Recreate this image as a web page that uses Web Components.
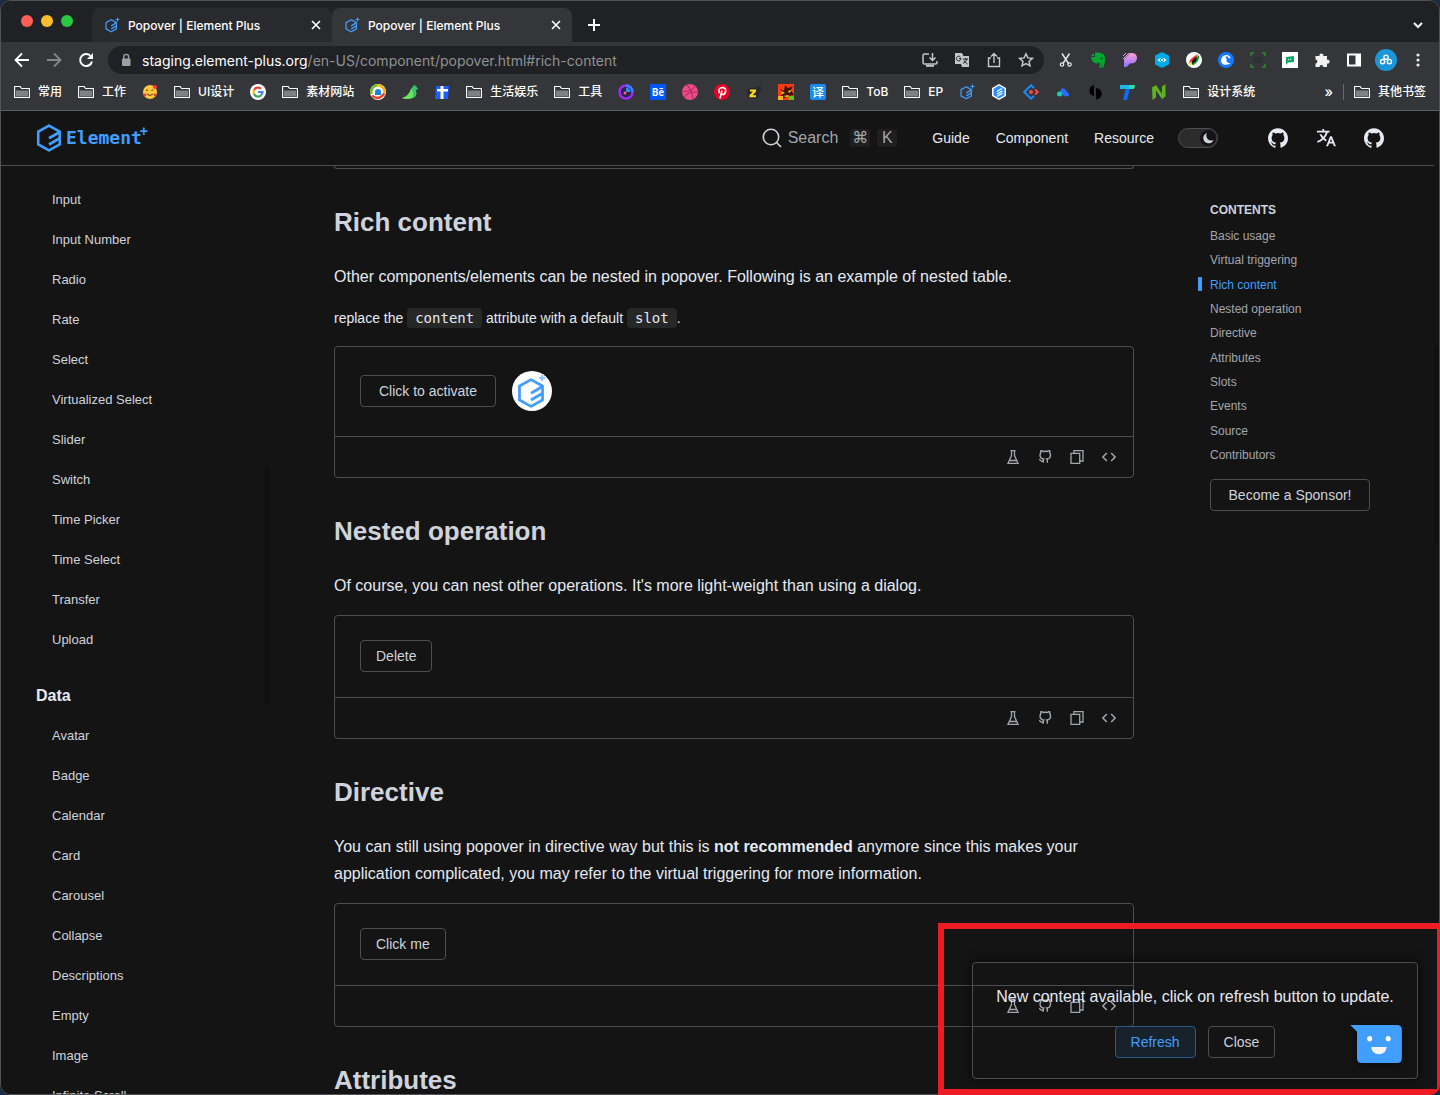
<!DOCTYPE html>
<html lang="en">
<head>
<meta charset="utf-8">
<title>Popover | Element Plus</title>
<style>
	html, body {
		height: 100%;
		margin: 0;
		overflow: hidden;
		background: #1b2a45;
		font-family: "Liberation Sans", "Noto Sans CJK SC", sans-serif;
	}
</style>
</head>
<body>
<browser-window>
	<tab-strip slot="chrome">
		<browser-tab>Popover | Element Plus</browser-tab>
		<browser-tab active>Popover | Element Plus</browser-tab>
	</tab-strip>
	<address-bar slot="chrome"></address-bar>
	<bookmark-bar slot="chrome"></bookmark-bar>
	<site-header></site-header>
	<doc-layout>
		<side-menu slot="side"></side-menu>
		<doc-section>
			<demo-tail></demo-tail>
			<h2>Rich content</h2>
			<p>Other components/elements can be nested in popover. Following is an example of nested table.</p>
			<p class="tip">replace the <code>content</code> attribute with a default <code>slot</code>.</p>
			<demo-card><el-button wide>Click to activate</el-button><el-avatar></el-avatar></demo-card>
			<h2>Nested operation</h2>
			<p>Of course, you can nest other operations. It's more light-weight than using a dialog.</p>
			<demo-card><el-button>Delete</el-button></demo-card>
			<h2>Directive</h2>
			<p>You can still using popover in directive way but this is <b>not recommended</b> anymore since this makes your application complicated, you may refer to the virtual triggering for more information.</p>
			<demo-card><el-button>Click me</el-button></demo-card>
			<h2>Attributes</h2>
		</doc-section>
		<table-of-contents slot="toc"></table-of-contents>
	</doc-layout>
	<update-popup></update-popup>
	<chat-face></chat-face>
	<red-marker></red-marker>
</browser-window>
<script>
const MARK = `<path d="M22 8V7L12 1.400 2 7v12l10 5.600L22 19V8" fill="none" stroke="currentColor" stroke-width="2.400" stroke-linejoin="round"/><path d="M12 13.200 22 7.400M12 19 22 13.200" fill="none" stroke="currentColor" stroke-width="2.600"/>`;
const GITHUB = `<path fill="currentColor" d="M12 .3C5.370.3 0 5.670 0 12.300c0 5.300 3.440 9.800 8.200 11.380.6.110.820-.260.820-.580v-2.040c-3.340.730-4.040-1.610-4.040-1.610-.550-1.380-1.340-1.750-1.340-1.750-1.090-.740.080-.730.080-.730 1.200.080 1.840 1.240 1.840 1.240 1.070 1.830 2.810 1.300 3.490 1 .110-.780.420-1.310.760-1.610-2.660-.3-5.460-1.330-5.460-5.930 0-1.310.460-2.380 1.230-3.220-.130-.3-.540-1.520.110-3.170 0 0 1-.320 3.300 1.230a11.500 11.500 0 0 1 6 0c2.280-1.550 3.280-1.230 3.280-1.230.650 1.650.240 2.870.120 3.170.770.840 1.230 1.910 1.230 3.220 0 4.610-2.800 5.630-5.470 5.920.420.360.810 1.100.810 2.220v3.290c0 .310.210.690.820.570C20.560 22.100 24 17.600 24 12.300 24 5.670 18.630.3 12 .3"/>`;

// [viewBox, markup]
const ICONS = {
	mark: ["1 0 22 26",MARK],
	favicon: ["0 0 16 16",`<g transform="translate(1 2) scale(.52)">${MARK}</g><path d="M13.500.5v4M11.500 2.500h4" stroke="currentColor"/>`],
	close: ["0 0 16 16",`<path d="m4 4 8 8M12 4l-8 8" stroke="currentColor" stroke-width="1.600"/>`],
	plus: ["0 0 16 16",`<path d="M8 2v12M2 8h12" stroke="currentColor" stroke-width="2"/>`],
	chevron: ["0 0 16 16",`<path d="m4 6 4 4 4-4" fill="none" stroke="currentColor" stroke-width="2"/>`],
	back: ["0 0 16 16",`<path d="M15 8H2M8 1.500 1.500 8 8 14.500" fill="none" stroke="currentColor" stroke-width="1.800"/>`],
	forward: ["0 0 16 16",`<path d="M1 8h13M8 1.500 14.500 8 8 14.500" fill="none" stroke="currentColor" stroke-width="1.800"/>`],
	reload: ["0 0 16 16",`<path d="M13 4.500A6 6 0 1 0 14 9.500" fill="none" stroke="currentColor" stroke-width="2"/><path d="M15 1v6H9z" fill="currentColor"/>`],
	lock: ["0 0 16 16",`<rect x="4" y="6.500" width="8.500" height="7.500" rx="1" fill="currentColor"/><path d="M5.800 7V4.800a2.400 2.400 0 0 1 4.800 0V7" fill="none" stroke="currentColor" stroke-width="1.400"/>`],
	install: ["0 0 16 16",`<path d="M7 2H2.500Q1 2 1 3.500v7Q1 12 2.500 12h11q1.500 0 1.500-1.500V9M10.500 1v7M7.500 5.500l3 3 3-3" fill="none" stroke="currentColor" stroke-width="1.500"/><path d="M4 13h8v1.800H4z" fill="currentColor"/>`],
	gtranslate: ["0 0 16 16",`<path d="M1 1h7l1.500 3H15v11H8l-1-3H1z" fill="currentColor"/><path d="M7 6.500H5M7 6.500A2.300 2.300 0 1 1 6.400 5M9 7h5M11.500 6v1M13 7q-1 3-4 4.500M10 8.500q1 2 3.500 3.500" fill="none" stroke="#202124"/>`],
	share: ["0 0 16 16",`<path d="M5 6H2.500v8.500h11V6H11M8 11V1.500M5 4.500l3-3 3 3" fill="none" stroke="currentColor" stroke-width="1.400"/>`],
	star: ["0 0 16 16",`<path d="m8 1.800 1.900 4.100 4.500.5-3.400 3 1 4.400L8 11.500l-4 2.300 1-4.400-3.400-3 4.500-.5z" fill="none" stroke="currentColor" stroke-width="1.500"/>`],
	scissors: ["0 0 16 16",`<path d="m4 1.500 6.500 10M11.500 1.500 5 11.500" fill="none" stroke="#e8e8e8" stroke-width="1.400"/><circle cx="4" cy="12.500" r="1.700" fill="none" stroke="#e8e8e8" stroke-width="1.200"/><circle cx="11.500" cy="12.500" r="1.700" fill="none" stroke="#e8e8e8" stroke-width="1.200"/>`],
	evernote: ["0 0 16 16",`<path d="M5 .5h5q1 1.200 3 1.500 1.800.3 2 5 0 5-1.500 8Q12 16.500 9.500 15q-1-2 1-2.800l-2-1.700Q7 12 4.500 11 1.500 9.500 1.200 5H5z" fill="#00a82d"/><path d="M4 1v3H1z" fill="#00a82d"/><circle cx="11.500" cy="6.500" r="1" fill="#35363a"/><path d="M11 13.500h1.500" stroke="#35363a"/>`],
	popsy: ["0 0 16 16",`<defs><linearGradient id="a" x2="0" y2="1"><stop stop-color="#ff9fd8"/><stop offset="1" stop-color="#8a70ff"/></linearGradient></defs><path d="M2 7 8 1q7-.5 7 5t-7 5.500L4.500 15H2z" fill="url(#a)"/><path d="M1 4 4 1M1 7l6-6" stroke="#e69be6"/>`],
	hexeye: ["0 0 16 16",`<path d="m8 0 7 3.500v9L8 16l-7-3.500v-9z" fill="#00a9e8"/><path d="M3.500 8Q8 3.500 12.500 8 8 12.500 3.500 8" fill="#fff"/><circle cx="8" cy="8" r="1.700" fill="#fff" stroke="#00a9e8"/>`],
	pen: ["0 0 16 16",`<circle cx="8" cy="8" r="8" fill="#fff"/><path d="M2.500 12Q4 6 12 2l-4 6z" fill="#f22"/><path d="m5 11 8-8Q14 9 7 13.500z" fill="#00a020"/><path d="m6 9 5-5-1 5-4 3z" fill="#111"/><path d="m3 14 1-4 2 2z" fill="#ff0"/>`],
	wave: ["0 0 16 16",`<circle cx="8" cy="8" r="8" fill="#1677ff"/><path d="M3 9.500Q3 3 8.500 3q3.500.2 4 3.500-3-1.500-4 .8-.5 3.700 4 4.200Q5 15 3 9.500" fill="#fff"/><circle cx="9" cy="5.500" r="1.200" fill="#1677ff"/>`],
	frame: ["0 0 16 16",`<path d="M1 4V1h3M12 1h3v3M15 12v3h-3M4 15H1v-3" fill="none" stroke="#2f8c2f" stroke-width="1.400"/><rect x="3" y="5" width="10" height="6" fill="#2f3032"/>`],
	note: ["0 0 16 16",`<path d="M0 0h16v16H0z" fill="#fff"/><path d="m4 5 8-1v6l-6 .6L4 13z" fill="#07a860"/><path d="M6 7.500h4" stroke="#fff" stroke-dasharray="1"/>`],
	puzzle: ["0 0 16 16",`<path d="M1.500 4h4a2 2 0 1 1 3.800 0h3.700v3.800a2 2 0 1 1 0 3.800V15H9.300a1.900 1.900 0 1 0-3.800 0h-4v-3.600a1.900 1.900 0 1 0 0-3.800z" fill="#f1f1f1"/>`],
	panel: ["0 0 16 16",`<path d="M1 1.500h14v13H1z" fill="#fff"/><path d="M3 3.500h6.500v9H3z" fill="#35363a"/>`],
	account: ["0 0 24 24",`<circle cx="12" cy="12" r="12" fill="#1b96d8"/><g fill="none" stroke="#fff" stroke-width="1.500"><circle cx="12" cy="9" r="2.300"/><circle cx="8.300" cy="13.800" r="2.300"/><circle cx="15.700" cy="13.800" r="2.300"/></g>`],
	dots: ["0 0 16 16",`<g fill="#e8eaed"><circle cx="8" cy="3" r="1.600"/><circle cx="8" cy="8" r="1.600"/><circle cx="8" cy="13" r="1.600"/></g>`],
	folder: ["0 0 16 16",`<path d="M.6 2.500h5.600l1.400 2h7.800v9H.6z" fill="#35363a" stroke="#fff" stroke-width="1.100"/><path d="M2 6.500h12v6H2z" fill="#808184"/>`],
	emoji: ["0 0 16 16",`<circle cx="8" cy="8" r="7" fill="#ffc83d"/><path d="M4 6.500q1-1.500 2 0M9.500 6.500q1-1.500 2 0" fill="none" stroke="#5c3a10"/><path d="M5 10q3 3 6 0" fill="none" stroke="#5c3a10"/><g fill="#ef3b4e"><circle cx="3" cy="11" r="1.400"/><circle cx="13" cy="11" r="1.400"/><circle cx="13" cy="3" r="2"/></g>`],
	google: ["0 0 16 16",`<circle cx="8" cy="8" r="8" fill="#fff"/><g fill="none" stroke-width="2.200"><path d="M11 4.700A4.500 4.500 0 0 0 4 6" stroke="#ea4335"/><path d="M4.100 5.800a4.500 4.500 0 0 0 0 4.400" stroke="#fbbc05"/><path d="M4 10a4.500 4.500 0 0 0 7 1.500" stroke="#34a853"/><path d="M10.800 11.500A4.500 4.500 0 0 0 12.500 8H8" stroke="#4285f4"/></g>`],
	bot: ["0 0 16 16",`<circle cx="8" cy="8" r="8" fill="#fff"/><path d="M1.500 10A7 7 0 0 1 7 1.300" stroke="#6fbf1e" stroke-width="2.500" fill="none"/><path d="M7 1.300a7 7 0 0 1 7.500 8" stroke="#ffb000" stroke-width="2.500" fill="none"/><path d="M2 11.500q5.500 6 12.500-2" stroke="#f04020" stroke-width="2.500" fill="none"/><path d="M5 11V8a3 3 0 0 1 6 0v3z" fill="#1d82d8"/>`],
	bird: ["0 0 16 16",`<path d="M0 14Q7 12 9 5l3-4 2 1 2 3-2 1q2 8-5 8.500Q4 15.500 0 14" fill="#36c46a"/><path d="M0 14Q7 12 9 5q4 4 1 9-5 2-10 0" fill="#6ee05a"/>`],
	sticker: ["0 0 16 16",`<path d="M2 2h13l-1 13H1z" fill="#1f5bff"/><path d="M3 5h11v2.500H9.500V15h-3V7.500H3zM6.500 2h3v3h-3z" fill="#fff"/>`],
	swirl: ["0 0 16 16",`<circle cx="8" cy="8" r="6.500" fill="#2c2440" stroke="#9b2cf2" stroke-width="2.600"/><path d="M8 1.500A6.500 6.500 0 0 1 14.500 8" fill="none" stroke="#3d7dff" stroke-width="2.600"/><path d="M8 3.500A4.500 4.500 0 0 1 12.500 8H8z" fill="#2d8cf0"/><circle cx="7" cy="9" r="1.500" fill="#ff5ba8"/>`],
	behance: ["0 0 16 16",`<path d="M0 0h16v16H0z" fill="#0057ff"/><text x="8" y="12" font-family="Roboto, sans-serif" font-size="10" font-weight="700" fill="#fff" text-anchor="middle">Bē</text>`],
	dribbble: ["0 0 16 16",`<circle cx="8" cy="8" r="8" fill="#ea4c89"/><path d="M5 1q5 5 6 14M.6 7.500q8 .5 12.500-5M2.500 13q4-6.500 13-4.500" fill="none" stroke="#b52a63" stroke-width="1.100"/>`],
	pinterest: ["0 0 16 16",`<circle cx="8" cy="8" r="8" fill="#e60023"/><path d="m6 14.500 2-8M5.500 9.300Q3.500 4 8 3.500q4 0 3.700 3.500-.7 3.700-3 3.500-1.500-.3-1.300-1.500" fill="none" stroke="#fff" stroke-width="1.600"/>`],
	zcool: ["0 0 16 16",`<path d="M.5 8Q3 3 8 4q3 .5 4-3l.5 2.500L15 .5l-.5 3.500H16q-1 3-3 4 1 7-6 7Q1 15 .5 8" fill="#28292b"/><path d="M4 5.500h6v2L6.700 11.200H10v2H3.500v-2L7 7.500H4z" fill="#ffd91a"/>`],
	dragon: ["0 0 16 16",`<path d="M0 0h16v16H0z" fill="#ff3b12"/><path d="m2 5 4 2 1-6 3 3 5-2-2 4 3 5-6 1-5 3-4-2 4-3z" fill="#40110f"/><path d="m3 7 4 2-3 1zM10 7l4-1-3 3zM5 12l6-1-2 2z" fill="#ffd91a"/><path d="M10 12h6v4h-5z" fill="#6abf20"/><path d="M0 12h5v4H0z" fill="#ffb01a"/>`],
	yi: ["0 0 16 16",`<rect width="16" height="16" rx="2" fill="#168cf5"/><text x="8" y="12.500" font-family="Noto Sans CJK SC, sans-serif" font-size="12" fill="#fff" text-anchor="middle">译</text>`],
	hex: ["0 0 16 16",`<path d="m8 0 7 4v8l-7 4-7-4V4z" fill="#fff"/><path d="m8 1.500 5.500 3.200v6.600L8 14.500l-5.500-3.200V4.700z" fill="#2b8ffb"/><path d="m6 7.500 5-3M6 10l5.500-3M6 12.300l5.500-3" stroke="#fff" stroke-width="1.300"/>`],
	antd: ["0 0 16 16",`<path d="M11 4 8 1.200 1.200 8 8 14.800l3-3" fill="none" stroke="#1989fa" stroke-width="2"/><path d="m12 5.500 2.700 2.500-2.700 2.500" fill="none" stroke="#f5484f" stroke-width="2"/><circle cx="8" cy="8" r="2" fill="#f5484f"/>`],
	arco: ["0 0 16 16",`<path d="M6 5.500q2-2.500 4.200 0L14 10q.5 2.500-3 2.500-4-.5-6-5z" fill="#2a6bff"/><circle cx="4.500" cy="10" r="2.500" fill="#1ad1a5"/>`],
	halves: ["0 0 16 16",`<path d="M7 1v11A5.600 5.600 0 0 1 7 1M9 4a5.600 5.600 0 0 1 0 11.500z" fill="#000"/>`],
	tdesign: ["0 0 16 16",`<path d="M7 4h4L8 16H4z" fill="#0a6cff"/><path d="M1 1h15l-1 4H1z" fill="#19b8e8"/><path d="M10 1h6l-1 4h-5z" fill="#2edb9c"/>`],
	naive: ["0 0 16 16",`<path d="M1 3.500 5 1l6 9V2.500L14.500 0v12.500L11 15 5 6.500v7L1.500 16z" fill="#5db320"/>`],
	search: ["0 0 20 20",`<circle cx="9" cy="9" r="7.700" fill="none" stroke="currentColor" stroke-width="1.600"/><path d="m14.500 14.500 4.500 4.500" stroke="currentColor" stroke-width="1.600"/>`],
	moon: ["0 0 16 16",`<path d="M7 3a5.300 5.300 0 1 0 6.500 7A5 5 0 0 1 7 3" fill="currentColor"/>`],
	github: ["0 0 24 24",GITHUB],
	translate: ["1 1 22 22",`<path d="M18.500 10l4.400 11h-2.150l-1.200-3h-4.100l-1.200 3H12.100L16.500 10zM10 2v2h6v2h-1.970a18.200 18.200 0 0 1-3.620 6.300 14.900 14.900 0 0 0 2.340 1.700l-.750 1.880A17 17 0 0 1 9 13.720a16.700 16.700 0 0 1-6.200 3.550l-.540-1.930a14.700 14.700 0 0 0 5.330-3.040A18 18 0 0 1 4.770 8H7a16 16 0 0 0 2 2.880A16.200 16.200 0 0 0 11.910 6H2V4h6V2zm7.500 10.880L16.250 16h2.500z" fill="currentColor"/>`],
	flask: ["1 1 14 14",`<path d="M5.500 1.700h5M6.500 1.500v5L3 14.300h10L9.500 6.500v-5M4.500 11.500h7" fill="none" stroke="currentColor" stroke-width="1.300"/>`],
	cat: ["0 0 24 24",`<path d="M9 19c-5 1.500-5-2.500-7-3m14 6v-3.900a3.400 3.400 0 0 0-.9-2.600c3.100-.3 6.400-1.500 6.400-7A5.400 5.400 0 0 0 20 4.800 5 5 0 0 0 19.900 1S18.700.6 16 2.500a13.400 13.400 0 0 0-7 0C6.300.6 5.100 1 5.100 1A5 5 0 0 0 5 4.800a5.400 5.400 0 0 0-1.500 3.800c0 5.400 3.300 6.600 6.400 7A3.400 3.400 0 0 0 9 18.100V22" fill="none" stroke="currentColor" stroke-width="2.400"/>`],
	copy: ["1 1 14 14",`<path d="M5 4V1.700h9V12h-3M2 4.300h8.700v10H2z" fill="none" stroke="currentColor" stroke-width="1.300"/>`],
	code: ["0 0 16 16",`<path d="M5.500 3.500 1 8l4.500 4.500M10.500 3.500 15 8l-4.500 4.500" fill="none" stroke="currentColor" stroke-width="1.700"/>`],
	face: ["0 0 54 40",`<path d="M0 0h48q5 0 5 5v29q0 5-5 5H12q-5 0-5-5V7z" fill="#409eff"/><circle cx="20" cy="14" r="2.600" fill="#fff"/><circle cx="39" cy="14" r="2.600" fill="#fff"/><path d="M21.500 22.500h16q-1 7.500-8 7.500t-8-7.500" fill="#f5f5f5"/>`],
};

class UiIcon extends HTMLElement {
	constructor(){
		super();
		this.attachShadow({mode:"open"});
	}

	connectedCallback(){
		const [viewBox,markup] = ICONS[this.getAttribute("name")];
		this.shadowRoot.innerHTML = /*html*/`
			<style>
				:host {
					display: block;
					flex: none;
					width: 16px;
					height: 16px;
				}
				svg {
					display: block;
					width: 100%;
					height: 100%;
				}
			</style>
			<svg viewBox="${viewBox}" aria-hidden="true">${markup}</svg>
		`;
	}
}
customElements.define("ui-icon",UiIcon);

/** Registers an element whose shadow root is fixed markup. */
function define(name,html){
	customElements.define(name,class extends HTMLElement {
		constructor(){
			super();
			this.attachShadow({mode:"open"}).innerHTML = html;
		}
	});
}

const icon = name=>`<ui-icon name="${name}"></ui-icon>`;
const iconButton = (name,label=name)=>`<button type="button" aria-label="${label}">${icon(name)}</button>`;
const RESET = `
	button, a, input {
		font: inherit;
		color: inherit;
		text-decoration: none;
		background: none;
		border: 0;
		padding: 0;
		margin: 0;
	}
	button {
		display: grid;
		place-items: center;
	}
`;

define("browser-window",/*html*/`
	<style>
		:host {
			display: flex;
			flex-direction: column;
			position: relative;
			box-sizing: border-box;
			height: 100vh;
			overflow: hidden;
			background: #141414;
			border-radius: 10px;
		}
		header {
			flex: none;
			font-family: Inter, "Noto Sans CJK SC", sans-serif;
			border-bottom: 1px solid #5c5d60;
		}
		#edge {
			position: absolute;
			inset: 0;
			border: 1px solid #525356;
			border-radius: 10px;
			pointer-events: none;
		}
		#thumb {
			position: absolute;
			right: 0;
			top: 346px;
			width: 6px;
			height: 198px;
			background: #101010;
		}
	</style>
	<header><slot name="chrome"></slot></header>
	<slot></slot>
	<div id="thumb"></div>
	<div id="edge"></div>
`);

define("tab-strip",/*html*/`
	<style>
		${RESET}
		:host {
			display: flex;
			box-sizing: border-box;
			height: 42px;
			padding: 8px 14px 0 21px;
			background: #202124;
			color: #fff;
		}
		#lights {
			display: flex;
			gap: 8px;
			padding-top: 7px;
			width: 71px;
		}
		i {
			width: 12px;
			height: 12px;
			border-radius: 50%;
			background: #ff5f57;
		}
		i:nth-child(2) { background: #febc2e; }
		i:nth-child(3) { background: #28c840; }
		button { margin-left: 14px; }
		button:last-child { margin-left: auto; }
	</style>
	<div id="lights"><i></i><i></i><i></i></div>
	<slot></slot>
	${iconButton("plus","New tab")}
	${iconButton("chevron","Search tabs")}
`);

define("browser-tab",/*html*/`
	<style>
		${RESET}
		:host {
			display: flex;
			align-items: center;
			gap: 8px;
			box-sizing: border-box;
			width: 240px;
			padding: 0 8px 0 12px;
			border-radius: 8px 8px 0 0;
			background: #292a2d;
			font-size: 12px;
			font-weight: 500;
		}
		:host([active]) {
			background: #35363a;
		}
		ui-icon[name=favicon] { color: #409eff; }
		span { flex: 1; }
	</style>
	${icon("favicon")}
	<span><slot></slot></span>
	${iconButton("close","Close tab")}
`);

define("address-bar",/*html*/`
	<style>
		${RESET}
		:host {
			display: flex;
			align-items: center;
			height: 36px;
			padding: 0 6px;
			background: #35363a;
			color: #fff;
		}
		button {
			flex: none;
			width: 32px;
			height: 28px;
		}
		button[aria-label=Forward] { color: #85868a; }
		#omnibox {
			flex: 1;
			display: flex;
			align-items: center;
			min-width: 0;
			height: 28px;
			margin: 0 6px;
			padding: 0 2px 0 10px;
			border-radius: 14px;
			background: #202124;
			font-size: 14px;
		}
		#omnibox ui-icon { color: #9aa0a6; }
		#omnibox button ui-icon { color: #c4c5c7; }
		label { margin-left: 8px; }
		input {
			flex: 1;
			min-width: 0;
			color: #8f9195;
		}
		ui-icon[name=account] {
			width: 22px;
			height: 22px;
		}
	</style>
	${iconButton("back","Back")}${iconButton("forward","Forward")}${iconButton("reload","Reload")}
	<div id="omnibox">
		${icon("lock")}
		<label for="url">staging.element-plus.org</label><input id="url" value="/en-US/component/popover.html#rich-content">
		${["install","gtranslate","share","star"].map(n=>iconButton(n)).join("")}
	</div>
	${["scissors","evernote","popsy","hexeye","pen","wave","frame","note","puzzle","panel","account","dots"].map(n=>iconButton(n)).join("")}
`);

// plain strings are folders, ":name" is an icon without a title
const bookmark = item=>item[0]==":"
	? `<a href="#" aria-label="${item.slice(1)}">${icon(item.slice(1))}</a>`
	: `<a href="#">${icon("folder")}${item}</a>`;
define("bookmark-bar",/*html*/`
	<style>
		${RESET}
		:host {
			display: flex;
			align-items: center;
			gap: 16px;
			height: 27px;
			padding: 0 14px 5px;
			background: #35363a;
			color: #fff;
			font-size: 12px;
			font-weight: 500;
			line-height: 16px;
			white-space: nowrap;
		}
		a {
			display: flex;
			align-items: center;
			gap: 8px;
		}
		ui-icon[name=favicon] { color: #409eff; }
		#more {
			margin-left: auto;
			font-size: 14px;
		}
		#other {
			padding-left: 10px;
			margin-left: -6px;
			border-left: 1px solid #66676b;
		}
	</style>
	${["常用","工作",":emoji","UI设计",":google","素材网站",":bot",":bird",":sticker","生活娱乐","工具",":swirl",":behance",":dribbble",":pinterest",":zcool",":dragon",":yi","ToB","EP",":favicon",":hex",":antd",":arco",":halves",":tdesign",":naive","设计系统"].map(bookmark).join("")}
	<button type="button" id="more">»</button>
	<a href="#" id="other">${icon("folder")}其他书签</a>
`);

define("site-header",/*html*/`
	<style>
		${RESET}
		:host {
			display: flex;
			align-items: center;
			flex: none;
			height: 54px;
			margin-right: 6px;
			padding: 0 48px 0 36px;
			border-bottom: 1px solid #4c4d4f;
			color: #e5eaf3;
			font-size: 14px;
		}
		#logo {
			display: flex;
			align-items: center;
			gap: 4px;
			color: #409eff;
			font: bold 18px/28px "DejaVu Sans Mono", monospace;
		}
		#logo ui-icon {
			width: 26px;
			height: 28px;
		}
		#logo sup {
			align-self: flex-start;
			margin-left: -6px;
			font: bold 14px/14px "Liberation Sans", sans-serif;
		}
		#search {
			display: flex;
			align-items: center;
			margin-left: auto;
			color: #a3a6ad;
			font-size: 16px;
		}
		#search ui-icon {
			width: 20px;
			height: 20px;
			margin-right: 6px;
			color: #cfd3dc;
		}
		kbd {
			width: 20px;
			height: 18px;
			margin-left: 7px;
			border-radius: 3px;
			background: #1f1f20;
			font: 16px/18px "Liberation Sans", "DejaVu Sans", sans-serif;
			text-align: center;
		}
		kbd:first-of-type { margin-left: 12px; }
		nav {
			display: flex;
			gap: 26px;
			margin: 0 24px 0 35px;
		}
		#dark {
			display: flex;
			position: relative;
			margin-right: 48px;
		}
		#dark input {
			appearance: none;
			box-sizing: border-box;
			width: 40px;
			height: 20px;
			border: 1px solid #4c4d4f;
			border-radius: 10px;
			background: #2c2c2c;
		}
		#dark ui-icon {
			position: absolute;
			right: 2px;
			top: 2px;
			border-radius: 50%;
			background: #141414;
			color: #cfd3dc;
		}
		#links {
			display: flex;
			gap: 24px;
		}
		#links ui-icon {
			width: 20px;
			height: 20px;
			padding: 2px;
		}
	</style>
	<a href="#" id="logo">${icon("mark")}<span>Element</span><sup>+</sup></a>
	<button type="button" id="search">${icon("search")}Search<kbd>⌘</kbd><kbd>K</kbd></button>
	<nav><a href="#">Guide</a><a href="#">Component</a><a href="#">Resource</a></nav>
	<label id="dark"><input type="checkbox" role="switch" aria-label="Dark mode" checked>${icon("moon")}</label>
	<div id="links"><a href="#" aria-label="GitHub">${icon("github")}</a><button type="button" aria-label="Language">${icon("translate")}</button><a href="#" aria-label="GitHub">${icon("github")}</a></div>
`);

define("doc-layout",/*html*/`
	<style>
		:host {
			display: grid;
			grid-template-columns: 334px minmax(0,800px) minmax(0,1fr);
			flex: 1;
			min-height: 0;
			overflow: hidden;
		}
	</style>
	<slot name="side"></slot>
	<slot></slot>
	<slot name="toc"></slot>
`);

const menuLinks = names=>names.map(name=>`<a href="#">${name}</a>`).join("");
define("side-menu",/*html*/`
	<style>
		${RESET}
		:host {
			display: block;
			position: relative;
			padding: 14px 0 0 36px;
			color: #cfd3dc;
			font-size: 13px;
			line-height: 40px;
		}
		a {
			display: block;
			padding-left: 16px;
		}
		h3 {
			margin: 16px 0 0;
			color: #e5eaf3;
			font-size: 16px;
		}
		#thumb {
			position: absolute;
			left: 264px;
			top: 301px;
			width: 6px;
			height: 237px;
			border-radius: 3px;
			background: #101010;
		}
	</style>
	${menuLinks(["Input","Input Number","Radio","Rate","Select","Virtualized Select","Slider","Switch","Time Picker","Time Select","Transfer","Upload"])}
	<h3>Data</h3>
	${menuLinks(["Avatar","Badge","Calendar","Card","Carousel","Collapse","Descriptions","Empty","Image","Infinite Scroll"])}
	<div id="thumb"></div>
`);

define("doc-section",/*html*/`
	<style>
		:host {
			display: block;
			color: #e5eaf3;
		}
		::slotted(h2) {
			margin: 36px 0 24px !important;
			color: #cfd3dc;
			font-size: 26px !important;
			line-height: 34px;
		}
		::slotted(p) {
			margin: 0 0 16px !important;
			font-size: 16px;
			line-height: 27px;
		}
		::slotted(p.tip) {
			font-size: 14px;
			line-height: 24px;
		}
	</style>
	<slot></slot>
`);

// the end of the demo above, cut by the header
define("demo-tail",/*html*/`
	<style>
		:host {
			display: block;
			height: 2px;
			border: 1px solid #4c4d4f;
			border-top: 0;
			border-radius: 0 0 4px 4px;
		}
	</style>
`);

define("demo-card",/*html*/`
	<style>
		${RESET}
		:host {
			display: block;
			border: 1px solid #4c4d4f;
			border-radius: 4px;
		}
		#body {
			display: flex;
			align-items: center;
			gap: 16px;
			padding: 24px 25px 25px;
		}
		#tools {
			display: flex;
			justify-content: flex-end;
			height: 40px;
			padding-right: 8px;
			border-top: 1px solid #4c4d4f;
			color: #a3a6ad;
		}
		button { width: 32px; }
		ui-icon {
			width: 14px;
			height: 14px;
		}
	</style>
	<div id="body"><slot></slot></div>
	<div id="tools">${iconButton("flask","Playground")}${iconButton("cat","GitHub")}${iconButton("copy","Copy code")}${iconButton("code","View source")}</div>
`);

define("el-button",/*html*/`
	<style>
		${RESET}
		:host { display: block; }
		button {
			box-sizing: border-box;
			width: 100%;
			height: 32px;
			padding: 0 15px;
			border: 1px solid #4c4d4f;
			border-radius: 4px;
			color: #cfd3dc;
			font-size: 14px;
		}
		:host([wide]) button { width: 136px; }
		:host([primary]) button {
			border-color: #2a598a;
			background: #18222c;
			color: #409eff;
		}
	</style>
	<button type="button"><slot></slot></button>
`);

define("el-avatar",/*html*/`
	<style>
		:host {
			display: grid;
			place-items: center;
			position: relative;
			width: 40px;
			height: 40px;
			border-radius: 50%;
			background: #fff;
			color: #409eff;
		}
		ui-icon {
			width: 28px;
			height: 30px;
			padding: 4px 2px 0 0;
		}
		svg {
			position: absolute;
			right: 7px;
			top: 4px;
		}
	</style>
	${icon("mark")}
	<svg width="6" height="6"><path d="M3 0v6M0 3h6" stroke="#8fc5ff" stroke-width="2"/></svg>
`);

define("table-of-contents",/*html*/`
	<style>
		${RESET}
		:host {
			display: block;
			width: 160px;
			padding: 36px 0 0 76px;
			color: #a3a6ad;
			font-size: 12px;
			line-height: 16px;
		}
		h2 {
			margin: 0 0 10px;
			color: #cfd3dc;
			font-size: 12px;
		}
		ul {
			display: flex;
			flex-direction: column;
			justify-content: space-between;
			height: 235px;
			margin: 0 0 16px;
			padding: 0;
			list-style: none;
		}
		li { position: relative; }
		.current { color: #409eff; }
		.current::before {
			content: "";
			position: absolute;
			left: -12px;
			top: 0;
			width: 4px;
			height: 14px;
			border-radius: 1px;
			background: #409eff;
		}
	</style>
	<h2>CONTENTS</h2>
	<ul>${["Basic usage","Virtual triggering","Rich content","Nested operation","Directive","Attributes","Slots","Events","Source","Contributors"].map(t=>`<li${t=="Rich content"?` class="current"`:""}><a href="#">${t}</a></li>`).join("")}</ul>
	<el-button>Become a Sponsor!</el-button>
`);

define("update-popup",/*html*/`
	<style>
		:host {
			position: absolute;
			right: 22px;
			bottom: 16px;
			min-width: 404px;
			padding: 20px;
			border: 1px solid #4c4d4f;
			border-radius: 4px;
			box-shadow: 0 0 12px rgba(0,0,0,0.72);
			color: #e5eaf3;
			text-align: center;
		}
		p {
			margin: 0 0 16px;
			font-size: 16px;
			line-height: 27px;
		}
		div {
			display: flex;
			justify-content: center;
			gap: 12px;
		}
	</style>
	<p>New content available, click on refresh button to update.</p>
	<div><el-button primary>Refresh</el-button><el-button>Close</el-button></div>
`);

define("chat-face",/*html*/`
	<style>
		${RESET}
		:host {
			position: absolute;
			right: 37px;
			bottom: 31px;
			filter: drop-shadow(0 2px 5px rgba(0,0,0,0.6));
		}
		ui-icon {
			width: 53px;
			height: 39px;
		}
	</style>
	${iconButton("face","Open chat")}
`);

define("red-marker",/*html*/`
	<style>
		:host {
			position: absolute;
			z-index: 1;
			right: -3px;
			bottom: 0;
			box-sizing: border-box;
			width: 505px;
			height: 172px;
			border: 6px solid #ed1c24;
			pointer-events: none;
		}
	</style>
`);

// slotted paragraphs keep their inline code in the page's own tree
document.querySelectorAll("doc-section code").forEach(code=>{
	code.style.cssText = `display: inline-block; padding: 0 8px; border-radius: 4px; background: #262727; color: #e5eaf3; font: 14px/20px "DejaVu Sans Mono", monospace`;
});
</script>
</body>
</html>
